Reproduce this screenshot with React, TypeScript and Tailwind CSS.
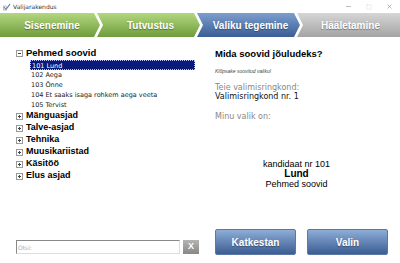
import { Minus, Square, X } from 'lucide-react';

const steps = [
  { label: 'Sisenemine', bg: 'bg-gradient-to-b from-[#b3d77f] to-[#6f9d3b]' },
  { label: 'Tutvustus', bg: 'bg-gradient-to-b from-[#b3d77f] to-[#6f9d3b]' },
  { label: 'Valiku tegemine', bg: 'bg-gradient-to-b from-[#7d9fcf] to-[#3a5e95]' },
  { label: 'Hääletamine', bg: 'bg-gradient-to-b from-[#d6d6d6] to-[#a4a4a4]' },
];

const items = ['101 Lund', '102 Aega', '103 Õnne', '104 Et saaks isaga rohkem aega veeta', '105 Tervist'];
const groups = ['Mänguasjad', 'Talve-asjad', 'Tehnika', 'Muusikariistad', 'Käsitöö', 'Elus asjad'];

function Toggle({ open }: { open?: boolean }) {
  return (
    <span className="w-[7px] h-[7px] border border-[#9a9a9a] bg-white flex items-center justify-center shrink-0 relative">
      <span className="absolute w-[3px] h-px bg-[#444]" />
      {!open && <span className="absolute w-px h-[3px] bg-[#444]" />}
    </span>
  );
}

export default function App() {
  return (
    <div className="w-[400px] h-[263px] bg-white flex flex-col overflow-hidden" style={{ fontFamily: '"Liberation Sans", Arial, sans-serif' }}>
      {/* title bar */}
      <div className="h-[13px] flex items-center pl-[3px] shrink-0">
        <svg width="8" height="8" viewBox="0 0 8 8" className="mr-[2px]">
          <path d="M1 4 L3 6.5 L7 1" stroke="#5a7fb5" strokeWidth="1.2" fill="none" />
          <rect x="0.5" y="3" width="3" height="4" fill="none" stroke="#999" strokeWidth="0.6" />
        </svg>
        <span className="text-[6px] text-[#333] leading-none" style={{ fontFamily: '"DejaVu Sans", Verdana, sans-serif' }}>Valijarakendus</span>
        <div className="ml-auto flex items-center gap-[14px] pr-[7px] text-[#666]">
          <Minus size={7} strokeWidth={1.5} />
          <Square size={6} strokeWidth={1} className="text-[#bbb]" />
          <X size={7} strokeWidth={1.5} />
        </div>
      </div>

      {/* steps */}
      <div className="h-[24px] flex shrink-0">
        {steps.map((s, i) => (
          <div
            key={s.label}
            className={`${s.bg} ${i === 0 ? 'w-[100px] [clip-path:polygon(0_0,calc(100%-6px)_0,100%_50%,calc(100%-6px)_100%,0_100%)]' : i === 3 ? 'flex-1 -ml-[3px] [clip-path:polygon(0_0,100%_0,100%_100%,0_100%,6px_50%)]' : 'w-[103px] -ml-[3px] [clip-path:polygon(0_0,calc(100%-6px)_0,100%_50%,calc(100%-6px)_100%,0_100%,6px_50%)]'} flex items-center justify-center pl-[4px]`}
          >
            <span className="text-white font-bold text-[10px] [text-shadow:0_1px_1px_rgba(0,0,0,0.35)]">{s.label}</span>
          </div>
        ))}
      </div>

      {/* body */}
      <div className="flex flex-1 min-h-0">
        <div className="w-[204px] flex flex-col pl-[16px] pt-[11px]">
          <div className="flex items-center gap-[3px] h-[10px]">
            <Toggle open />
            <span className="font-bold text-[9.5px] text-black">Pehmed soovid</span>
          </div>
          <div className="flex flex-col pl-[14px] mt-[2px]" style={{ fontFamily: '"DejaVu Sans", Verdana, sans-serif' }}>
            {items.map((it, i) => (
              <div
                key={it}
                className={`h-[10px] leading-[10px] text-[6.5px] pl-[1px] ${i === 0 ? 'bg-[#0a1a78] text-white w-[165px] border border-dotted border-[#c0c0ff] leading-[8px]' : 'text-[#222]'}`}
              >
                {it}
              </div>
            ))}
          </div>
          <div className="flex flex-col">
            {groups.map((g) => (
              <div key={g} className="flex items-center gap-[3px] h-[12px]">
                <Toggle />
                <span className="font-bold text-[9px] text-black">{g}</span>
              </div>
            ))}
          </div>
          <div className="mt-auto mb-[9px] flex items-center gap-[3px]">
            <div className="w-[164px] h-[14px] border border-[#888] border-b-[#ddd] border-r-[#ddd] flex items-center pl-[1px]">
              <span className="text-[6px] text-[#aaa]" style={{ fontFamily: '"DejaVu Sans", Verdana, sans-serif' }}>Otsi:</span>
            </div>
            <div className="w-[16px] h-[14px] bg-gradient-to-b from-[#b4b4b4] to-[#888] flex items-center justify-center">
              <span className="text-white font-bold text-[9px]">X</span>
            </div>
          </div>
        </div>

        <div className="flex-1 flex flex-col pl-[11px] pt-[11px] pr-[12px]">
          <div className="font-bold text-[9.5px] text-black leading-[12px]">Mida soovid jõuludeks?</div>
          <div className="italic text-[5px] text-[#444] mt-[8px]">Klõpsake soovitud valikul</div>
          <div className="mt-[7px] leading-[9px]" style={{ fontFamily: '"DejaVu Sans", Verdana, sans-serif' }}>
            <div className="text-[8px] text-[#888]">Teie valimisringkond:</div>
            <div className="text-[8px] text-[#111]">Valimisringkond nr. 1</div>
            <div className="text-[8px] text-[#888] mt-[11px]">Minu valik on:</div>
          </div>
          <div className="flex flex-col items-center mt-[38px] leading-[10px] pr-[10px]">
            <div className="text-[9px] text-black">kandidaat nr 101</div>
            <div className="text-[10px] font-bold text-black">Lund</div>
            <div className="text-[9px] text-black">Pehmed soovid</div>
          </div>
          <div className="mt-auto mb-[8px] flex justify-between">
            <div className="w-[81px] h-[26px] rounded-[2px] bg-gradient-to-b from-[#8eaed8] to-[#3c5d92] border border-[#5a77a5] flex items-center justify-center">
              <span className="text-white font-bold text-[10px] [text-shadow:0_1px_1px_rgba(0,0,0,0.35)]">Katkestan</span>
            </div>
            <div className="w-[81px] h-[26px] rounded-[2px] bg-gradient-to-b from-[#8eaed8] to-[#3c5d92] border border-[#5a77a5] flex items-center justify-center">
              <span className="text-white font-bold text-[10px] [text-shadow:0_1px_1px_rgba(0,0,0,0.35)]">Valin</span>
            </div>
          </div>
        </div>
      </div>
    </div>
  );
}
